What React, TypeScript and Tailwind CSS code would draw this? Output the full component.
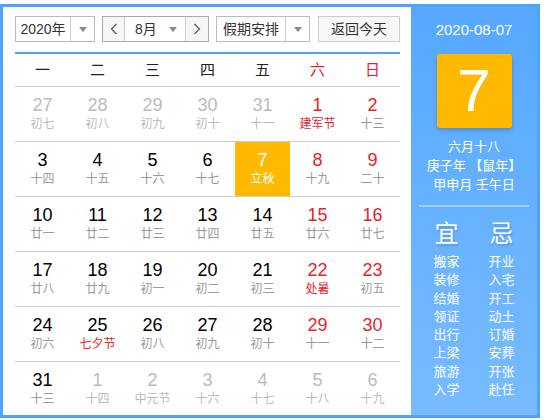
import React from "react";

type Day = {
  n: number;
  l: string;
  other?: boolean;
  fest?: boolean;
  sel?: boolean;
};

const weeks: Day[][] = [
  [
    { n: 27, l: "初七", other: true },
    { n: 28, l: "初八", other: true },
    { n: 29, l: "初九", other: true },
    { n: 30, l: "初十", other: true },
    { n: 31, l: "十一", other: true },
    { n: 1, l: "建军节", fest: true },
    { n: 2, l: "十三" },
  ],
  [
    { n: 3, l: "十四" },
    { n: 4, l: "十五" },
    { n: 5, l: "十六" },
    { n: 6, l: "十七" },
    { n: 7, l: "立秋", sel: true },
    { n: 8, l: "十九" },
    { n: 9, l: "二十" },
  ],
  [
    { n: 10, l: "廿一" },
    { n: 11, l: "廿二" },
    { n: 12, l: "廿三" },
    { n: 13, l: "廿四" },
    { n: 14, l: "廿五" },
    { n: 15, l: "廿六" },
    { n: 16, l: "廿七" },
  ],
  [
    { n: 17, l: "廿八" },
    { n: 18, l: "廿九" },
    { n: 19, l: "初一" },
    { n: 20, l: "初二" },
    { n: 21, l: "初三" },
    { n: 22, l: "处暑", fest: true },
    { n: 23, l: "初五" },
  ],
  [
    { n: 24, l: "初六" },
    { n: 25, l: "七夕节", fest: true },
    { n: 26, l: "初八" },
    { n: 27, l: "初九" },
    { n: 28, l: "初十" },
    { n: 29, l: "十一" },
    { n: 30, l: "十二" },
  ],
  [
    { n: 31, l: "十三" },
    { n: 1, l: "十四", other: true },
    { n: 2, l: "中元节", other: true },
    { n: 3, l: "十六", other: true },
    { n: 4, l: "十七", other: true },
    { n: 5, l: "十八", other: true },
    { n: 6, l: "十九", other: true },
  ],
];

const yi = ["搬家", "装修", "结婚", "领证", "出行", "上梁", "旅游", "入学"];
const ji = ["开业", "入宅", "开工", "动土", "订婚", "安葬", "开张", "赴任"];

const Caret = () => (
  <span className="w-0 h-0 border-l-[4px] border-r-[4px] border-t-[5px] border-l-transparent border-r-transparent border-t-[#888]" />
);

const Chevron = ({ dir }: { dir: "l" | "r" }) => (
  <svg width="8" height="12" viewBox="0 0 8 12" fill="none">
    <polyline
      points={dir === "l" ? "6.5,1 1.5,6 6.5,11" : "1.5,1 6.5,6 1.5,11"}
      stroke="#555"
      strokeWidth="1.2"
    />
  </svg>
);

function Cell({ d, weekend }: { d: Day; weekend: boolean }) {
  let num = "text-black";
  let lun = "text-[#999]";
  if (d.other) {
    num = "text-[#bbb]";
    lun = "text-[#bbb]";
  } else if (weekend) {
    num = "text-[#e8222a]";
  }
  if (d.fest && !d.other) lun = "text-[#e8222a]";
  if (d.sel) {
    num = "text-white";
    lun = "text-white";
  }
  return (
    <div
      className={`flex flex-col items-center justify-center ${d.sel ? "bg-[#ffb900]" : ""}`}
    >
      <span className={`text-[18px] leading-[20px] ${num}`}>{d.n}</span>
      <span className={`text-[12px] leading-[17px] mt-[1px] ${lun}`}>{d.l}</span>
    </div>
  );
}

export default function App() {
  return (
    <div
      className="pt-[4px]"
      style={{ fontFamily: '"Liberation Sans", "Noto Sans CJK SC", sans-serif' }}
    >
      <div className="w-[540px] h-[414px] border-[3px] border-[#4ea3fb] flex">
        {/* 左侧日历 */}
        <div className="w-[408px] bg-white pl-[12px] pr-[11px] pt-[9px]">
          <div className="flex items-center h-[26px] text-[14px] text-[#333]">
            <div className="flex w-[80px] h-[26px] border border-[#bbb]">
              <span className="flex-1 flex items-center justify-center">2020年</span>
              <span className="w-[24px] border-l border-[#ccc] flex items-center justify-center">
                <Caret />
              </span>
            </div>
            <div className="flex w-[107px] h-[26px] border border-[#aaa] ml-[7px]">
              <span className="w-[22px] bg-[#f6f6f6] flex items-center justify-center border-r border-[#ccc]">
                <Chevron dir="l" />
              </span>
              <span className="flex-1 flex items-center pl-[10px] pr-[8px] justify-between">
                8月
                <Caret />
              </span>
              <span className="w-[23px] bg-[#f6f6f6] flex items-center justify-center border-l border-[#ccc]">
                <Chevron dir="r" />
              </span>
            </div>
            <div className="flex w-[94px] h-[26px] border border-[#bbb] ml-[7px]">
              <span className="flex-1 flex items-center justify-center">假期安排</span>
              <span className="w-[24px] border-l border-[#ccc] flex items-center justify-center">
                <Caret />
              </span>
            </div>
            <button className="w-[82px] h-[26px] border border-[#ccc] bg-[#f7f7f7] ml-[8px] text-[14px] text-[#333]">
              返回今天
            </button>
          </div>

          <div className="mt-[10px] border-t-[2px] border-[#4ea3fb]">
            <div className="grid grid-cols-7 h-[33px] border-b border-[#ccc] text-[15px] items-center">
              {["一", "二", "三", "四", "五", "六", "日"].map((w, i) => (
                <span
                  key={w}
                  className={`text-center ${i >= 5 ? "text-[#e8222a]" : "text-[#222]"}`}
                >
                  {w}
                </span>
              ))}
            </div>
            {weeks.map((wk, r) => (
              <div
                key={r}
                className={`grid grid-cols-7 ${r < 5 ? "h-[55px] border-b border-[#ccc]" : "h-[53px]"}`}
              >
                {wk.map((d, i) => (
                  <Cell key={i} d={d} weekend={i >= 5} />
                ))}
              </div>
            ))}
          </div>
        </div>

        {/* 右侧详情 */}
        <div className="flex-1 bg-gradient-to-b from-[#55a8ff] to-[#78bbff] flex flex-col items-center text-white">
          <div className="mt-[14px] text-[15px] leading-[18px]">2020-08-07</div>
          <div className="mt-[15px] w-[75px] h-[74px] bg-[#ffb900] rounded-[3px] shadow-[0_2px_4px_rgba(0,0,0,0.2)] flex items-center justify-center text-[60px] font-light leading-none">
            7
          </div>
          <div className="mt-[9px] text-[13px] leading-[19px] text-center">
            <div>六月十八</div>
            <div>庚子年 【鼠年】</div>
            <div>甲申月 壬午日</div>
          </div>
          <div className="mt-[11px] w-[110px] h-[2px] bg-[#9fd0ff]" />
          <div className="mt-[14px] w-[110px] grid grid-cols-2 text-center">
            <span className="text-[24px] leading-[26px] [text-shadow:1px_2px_2px_rgba(0,0,0,0.15)]">宜</span>
            <span className="text-[24px] leading-[26px] [text-shadow:1px_2px_2px_rgba(0,0,0,0.15)]">忌</span>
          </div>
          <div className="mt-[6px] w-[110px] grid grid-cols-2 text-center text-[13px] leading-[18.3px]">
            <div className="flex flex-col">
              {yi.map((t) => (
                <span key={t}>{t}</span>
              ))}
            </div>
            <div className="flex flex-col">
              {ji.map((t) => (
                <span key={t}>{t}</span>
              ))}
            </div>
          </div>
        </div>
      </div>
    </div>
  );
}
